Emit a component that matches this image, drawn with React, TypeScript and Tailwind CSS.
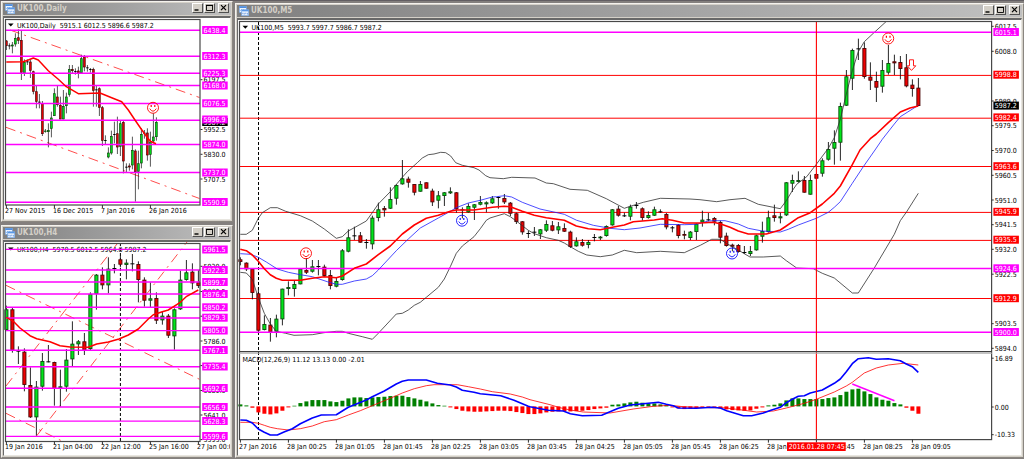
import type { ReactNode } from "react";

type Pt = [number, number];
type Tone = "g" | "r" | "k";
// high, low, body top, body bottom, tone; vertical values are in thirds of a pixel
type Candle = [number, number, number, number, Tone];

const FONT = "font-['DejaVu_Sans_Condensed','DejaVu_Sans',sans-serif]";
const MAGENTA = "#ff00ff";
const RED = "#ff0000";

const shift = (ox: number, oy: number, pts: Pt[]): Pt[] => pts.map(([x, y]) => [ox + x / 3, oy + y / 3]);
const lift = (oy: number, rows: Candle[]): Candle[] =>
  rows.map(([h, l, t, b, c]) => [oy + h / 3, oy + l / 3, oy + t / 3, oy + b / 3, c]);

const m5Candles: Candle[] = [
  ...lift(170, [
    [262, 286, 268, 276, "r"], [277, 303, 278, 298, "r"], [295, 388, 296, 369, "r"], [352, 490, 370, 482, "r"],
    [436, 481, 462, 480, "g"], [444, 515, 464, 487, "r"], [434, 502, 446, 485, "g"], [356, 466, 356, 448, "g"],
    [334, 376, 351, 357, "g"], [332, 380, 342, 357, "g"], [296, 343, 296, 343, "g"], [264, 312, 300, 308, "r"],
    [270, 308, 289, 305, "g"], [270, 316, 288, 291, "k"], [284, 320, 290, 318, "r"], [300, 358, 315, 348, "r"],
    [322, 352, 333, 350, "g"], [237, 332, 241, 330, "g"], [178, 247, 202, 245, "g"], [170, 210, 196, 199, "k"],
    [186, 218, 196, 218, "r"], [207, 236, 216, 219, "k"], [137, 238, 143, 223, "g"], [98, 154, 118, 144, "g"],
    [108, 140, 114, 121, "r"], [52, 117, 87, 116, "g"], [43, 104, 45, 86, "g"], [-30, 44, 25, 43, "g"],
    [20, 53, 26, 38, "r"], [42, 76, 42, 68, "r"], [33, 65, 42, 65, "g"], [37, 56, 37, 56, "r"],
    [56, 108, 62, 97, "r"], [63, 115, 76, 92, "g"], [66, 108, 67, 78, "g"], [52, 72, 64, 70, "g"],
    [66, 128, 67, 118, "r"], [112, 145, 118, 121, "k"], [100, 128, 108, 127, "g"], [102, 150, 103, 113, "g"],
    [78, 106, 96, 104, "g"], [94, 127, 97, 103, "g"],
  ]),
  ...lift(140, [
    [168, 192, 175, 190, "g"], [170, 206, 171, 174, "k"], [162, 192, 174, 187, "r"], [186, 228, 188, 221, "r"],
    [218, 252, 220, 246, "r"], [243, 284, 244, 277, "r"], [272, 294, 279, 282, "k"], [261, 288, 275, 279, "k"],
    [267, 297, 268, 283, "g"], [241, 276, 252, 272, "g"], [243, 274, 256, 272, "r"], [246, 282, 259, 271, "g"],
    [250, 276, 264, 275, "r"], [272, 324, 275, 321, "r"], [292, 320, 304, 319, "g"], [297, 320, 306, 317, "r"],
    [300, 325, 306, 315, "g"], [282, 304, 291, 294, "k"], [288, 300, 290, 295, "g"], [256, 290, 258, 288, "g"],
    [207, 257, 208, 256, "g"], [198, 230, 206, 227, "r"], [218, 231, 226, 229, "k"], [194, 241, 200, 230, "g"],
    [186, 206, 195, 198, "k"], [202, 242, 205, 234, "r"], [214, 236, 225, 234, "g"], [200, 228, 208, 227, "g"],
    [208, 218, 214, 217, "k"], [219, 268, 222, 262, "r"], [258, 277, 262, 265, "k"], [252, 295, 254, 288, "r"],
    [272, 298, 282, 287, "r"], [273, 300, 275, 294, "g"], [250, 300, 251, 276, "g"], [212, 260, 239, 247, "g"],
    [219, 244, 238, 241, "k"], [231, 256, 234, 245, "r"], [242, 310, 246, 293, "r"], [278, 320, 287, 318, "r"],
    [311, 334, 314, 320, "r"], [312, 338, 315, 336, "r"],
  ]),
  ...lift(150, [
    [288, 312, 306, 309, "k"], [288, 318, 303, 312, "g"], [254, 302, 256, 301, "g"], [215, 278, 243, 260, "g"],
    [182, 248, 202, 246, "g"], [164, 215, 196, 204, "r"], [188, 220, 199, 205, "g"], [96, 198, 97, 196, "g"],
    [74, 126, 90, 101, "g"], [64, 98, 90, 96, "g"], [78, 128, 90, 128, "r"], [74, 134, 90, 134, "g"],
    [70, 88, 72, 86, "r"],
  ]),
  ...lift(0, [
    [475, 530, 481, 521, "g"], [426, 482, 447, 479, "g"], [391, 494, 426, 446, "g"], [308, 482, 318, 428, "g"],
    [210, 318, 229, 317, "g"], [146, 270, 150, 236, "g"], [116, 180, 145, 149, "k"], [127, 236, 144, 231, "r"],
    [187, 270, 230, 242, "r"], [215, 306, 243, 263, "r"], [180, 278, 210, 260, "g"], [135, 224, 189, 218, "g"],
    [164, 225, 184, 190, "r"], [168, 238, 186, 207, "r"], [162, 262, 202, 259, "r"], [238, 290, 254, 267, "r"],
    [234, 318, 263, 318, "r"],
  ]),
];

const dailyCandles: Candle[] = lift(0, [
  [120, 150, 122, 138, "r"], [130, 148, 136, 141, "k"], [126, 160, 134, 139, "g"], [100, 140, 114, 133, "g"],
  [88, 132, 112, 122, "r"], [92, 240, 120, 218, "r"], [178, 228, 186, 220, "g"], [178, 195, 184, 189, "k"],
  [180, 234, 185, 212, "r"], [212, 283, 214, 275, "r"], [255, 325, 274, 305, "r"], [282, 325, 305, 309, "k"],
  [303, 408, 310, 402, "r"], [387, 398, 392, 395, "g"], [370, 442, 390, 396, "g"], [335, 412, 353, 386, "g"],
  [265, 348, 280, 348, "g"], [258, 320, 290, 315, "r"], [290, 358, 315, 358, "r"], [270, 358, 318, 358, "g"],
  [278, 340, 290, 318, "g"], [195, 290, 207, 284, "g"], [195, 220, 207, 213, "r"], [205, 224, 213, 218, "k"],
  [200, 235, 212, 220, "r"], [164, 220, 175, 219, "g"], [165, 214, 170, 202, "r"], [195, 215, 202, 207, "k"],
  [204, 218, 207, 211, "k"], [203, 320, 207, 272, "r"], [258, 320, 268, 272, "k"], [262, 348, 265, 323, "r"],
  [318, 438, 322, 422, "r"], [406, 432, 420, 426, "k"], [442, 475, 458, 472, "g"], [392, 464, 408, 460, "g"],
  [365, 430, 402, 408, "k"], [350, 462, 400, 442, "r"], [362, 468, 370, 440, "g"], [360, 520, 366, 484, "r"],
  [490, 516, 500, 505, "k"], [490, 512, 497, 502, "r"], [410, 508, 450, 496, "g"], [448, 605, 452, 516, "r"],
  [452, 568, 490, 515, "g"], [385, 505, 402, 490, "g"], [390, 416, 398, 402, "k"], [385, 482, 398, 466, "r"],
  [395, 500, 425, 464, "g"], [340, 430, 410, 424, "g"], [352, 422, 366, 411, "g"],
]);

const h4Candles: Candle[] = lift(224, [
  [245, 320, 256, 318, "g"], [252, 386, 256, 379, "r"], [367, 420, 380, 383, "k"], [373, 502, 383, 483, "r"],
  [430, 582, 483, 580, "r"], [471, 635, 488, 580, "g"], [387, 500, 411, 488, "g"], [363, 415, 412, 415, "k"],
  [413, 545, 414, 494, "r"], [437, 548, 487, 492, "g"], [375, 503, 407, 488, "g"], [292, 427, 359, 406, "g"],
  [348, 393, 352, 361, "g"], [327, 393, 352, 380, "r"], [205, 380, 210, 375, "g"], [150, 257, 152, 210, "g"],
  [130, 196, 152, 184, "r"], [100, 208, 134, 184, "g"], [120, 148, 132, 135, "k"], [95, 130, 106, 122, "r"],
  [106, 166, 116, 123, "g"], [90, 142, 118, 121, "k"], [112, 235, 120, 168, "r"], [160, 248, 167, 230, "r"],
  [175, 250, 223, 230, "g"], [205, 300, 222, 290, "r"], [262, 302, 275, 289, "g"], [270, 342, 275, 335, "r"],
  [253, 377, 256, 337, "g"], [140, 258, 167, 256, "g"], [108, 170, 145, 168, "g"], [118, 196, 143, 178, "r"],
  [138, 192, 175, 186, "r"],
]);

const maRed: Pt[] = [
  ...shift(234, 170, [[19, 238], [37, 242], [55, 255], [73, 274], [91, 296], [109, 314], [127, 325], [145, 331], [199, 331], [235, 325], [271, 320], [307, 323], [325, 318], [361, 295], [397, 282], [433, 254], [469, 228], [505, 192], [541, 165], [577, 145], [613, 136], [649, 124], [667, 120], [720, 120], [775, 112]]),
  ...shift(490, 140, [[43, 199], [61, 200], [97, 214], [133, 226], [169, 233], [223, 241], [259, 258], [295, 266], [331, 269], [367, 262], [403, 255], [430, 245], [493, 240], [517, 236], [547, 241], [583, 249], [630, 249]]),
  ...shift(700, 150, [[0, 219], [40, 217], [60, 221], [90, 232], [115, 243], [145, 252], [199, 252], [241, 240], [259, 228], [295, 203], [331, 188], [367, 162], [403, 130], [421, 108], [457, 44], [480, 0]]),
  ...shift(780, 0, [[271, 416], [289, 402], [325, 368], [361, 336], [390, 324], [415, 318]]),
];
const maBlue: Pt[] = [
  ...shift(234, 170, [[19, 251], [50, 253], [73, 262], [97, 276], [130, 297], [163, 307], [199, 314], [235, 320], [280, 335], [307, 343], [325, 343], [361, 333], [397, 327], [415, 317], [433, 300], [487, 242], [523, 207], [559, 174], [613, 144], [649, 124], [667, 113], [703, 99], [739, 91], [775, 81]]),
  ...shift(490, 140, [[20, 170], [43, 167], [65, 171], [97, 187], [150, 207], [223, 223], [260, 241], [310, 256], [360, 265], [403, 269], [450, 264], [511, 253], [583, 254], [619, 253], [655, 243]]),
  ...shift(700, 150, [[45, 212], [75, 212], [115, 222], [145, 235], [187, 243], [241, 246], [265, 238], [295, 225], [349, 205], [385, 187], [403, 172], [421, 155], [457, 100], [490, 50], [525, 0]]),
  ...shift(780, 0, [[307, 418], [343, 372], [361, 350], [415, 316]]),
];
const bandUpper: Pt[] = [
  ...shift(234, 170, [[19, 193], [37, 193], [55, 181], [73, 145], [85, 128], [109, 113], [130, 113], [155, 124], [199, 137], [235, 153], [271, 177], [307, 205], [325, 200], [343, 183], [361, 173], [397, 153], [415, 128], [433, 102], [469, 65], [490, 40]]),
  ...shift(234, 0, [[505, 532], [520, 515], [550, 488], [565, 474], [583, 464], [600, 462], [620, 457], [635, 458], [650, 468], [665, 488], [685, 496], [720, 503], [735, 510], [755, 527]]),
  ...shift(490, 140, [[0, 113], [40, 116], [65, 112], [135, 114], [169, 129], [190, 131], [240, 148], [292, 151], [349, 176], [403, 205], [421, 199], [460, 187], [511, 175], [600, 177]]),
  ...shift(700, 150, [[0, 149], [50, 155], [90, 149], [135, 145], [175, 163], [241, 176], [259, 152], [277, 122], [290, 103], [320, 80]]),
  ...shift(780, 0, [[109, 493], [145, 445], [163, 413], [181, 358], [199, 282], [217, 212], [235, 155], [253, 125], [280, 100], [318, 65]]),
];
const bandLower: Pt[] = [
  ...shift(234, 170, [[19, 307], [37, 309], [55, 328], [73, 383], [91, 430], [109, 462], [127, 484], [155, 490], [180, 496], [235, 494], [270, 488], [307, 484], [325, 484], [343, 490], [385, 500], [415, 508], [433, 490], [487, 432], [505, 430], [523, 420], [541, 406], [559, 397], [577, 382], [613, 352], [631, 327], [649, 290], [667, 250], [685, 228], [720, 200], [739, 176], [757, 151]]),
  ...shift(490, 140, [[0, 234], [43, 221], [61, 230], [79, 243], [115, 271], [133, 281], [169, 293], [205, 301], [223, 309], [241, 320], [265, 334], [290, 345], [331, 350], [367, 345], [403, 331], [440, 338], [511, 334], [583, 338], [631, 316], [665, 298], [691, 298], [709, 310]]),
  ...shift(700, 150, [[115, 300], [133, 311], [150, 321], [190, 321], [241, 318], [259, 332], [290, 354], [340, 356], [367, 370], [403, 384], [457, 429], [475, 429], [523, 354]]),
  ...shift(780, 190, [[343, 133], [361, 92], [380, 65], [415, 10]]),
];
const macdBlue: Pt[] = [
  ...shift(234, 340, [[19, 240], [37, 241], [55, 249], [73, 267], [91, 277], [109, 285], [130, 285], [150, 276], [175, 266], [199, 251], [235, 234], [262, 225], [307, 224], [343, 202], [397, 180], [415, 170], [451, 153], [487, 132], [505, 124], [523, 120], [577, 120], [610, 130], [649, 135], [667, 141], [685, 151], [720, 157], [739, 161], [800, 167], [840, 181], [883, 199]]),
  ...shift(530, 340, [[0, 200], [31, 206], [55, 211], [100, 213], [121, 221], [157, 227], [215, 226], [240, 215], [265, 205], [301, 195], [340, 191], [385, 187], [409, 193], [430, 197], [445, 204], [499, 205], [545, 202], [571, 204], [590, 212], [640, 227], [665, 227], [700, 219], [725, 210], [751, 202], [769, 188]]),
  ...shift(780, 190, [[37, 628], [55, 619], [73, 617], [91, 609], [127, 600], [163, 580], [181, 567], [199, 545], [217, 521], [235, 506], [265, 503], [289, 508], [325, 506], [361, 512], [379, 522], [397, 530], [415, 547]]),
];
const macdRed: Pt[] = [
  ...shift(234, 340, [[19, 247], [55, 247], [73, 250], [91, 256], [109, 262], [130, 266], [163, 270], [199, 266], [235, 258], [271, 245], [307, 239], [343, 225], [379, 212], [415, 197], [451, 182], [487, 167], [505, 159], [541, 146], [577, 137], [600, 134], [670, 134], [703, 140], [739, 147], [775, 155], [829, 162], [865, 171]]),
  ...shift(530, 340, [[0, 179], [60, 194], [90, 203], [120, 210], [160, 216], [240, 219], [310, 207], [370, 199], [420, 196], [460, 200], [540, 203], [580, 203], [620, 208], [680, 216], [730, 213], [769, 204]]),
  ...shift(780, 190, [[73, 640], [109, 628], [163, 606], [199, 588], [217, 577], [253, 549], [289, 534], [325, 525], [370, 520], [415, 525]]),
];
const histogram = [
  6, 3, -4, -18, -22, -24, -21, -13, -3, 2, 10, 15, 19, 19, 19, 15, 13, 17, 24, 27, 27, 25, 27, 28, 29, 31, 32, 32, 28,
  24, 20, 15, 9, 4, 2, -3, -8, -13, -15, -16, -16, -15, -14, -13, -13, -14, -17, -20, -23, -23, -21, -18, -16, -15, -14,
  -15, -14, -13, -11, -8, -6, -4, 5, 6, 9, 12, 14, 11, 9, 9, 6, 4, -3, -6, -8, -7, -5, -4, -4, -3, -6, -9, -11, -12, -13,
  -12, -7, -3, 3, 5, 9, 18, 24, 24, 22, 22, 22, 22, 25, 27, 34, 44, 51, 53, 45, 37, 27, 20, 17, 10, 6, -4, -13, -22,
];
const dailyMa = shift(0, 0, [[19, 186], [70, 185], [85, 180], [100, 174], [115, 180], [145, 212], [175, 238], [199, 260], [235, 281], [300, 279], [335, 293], [365, 305], [385, 330], [403, 357], [421, 383], [440, 410], [451, 424], [468, 431]]);
const h4Ma = shift(0, 224, [[19, 280], [40, 292], [60, 312], [90, 335], [110, 344], [150, 353], [180, 365], [210, 369], [265, 370], [290, 360], [325, 354], [357, 345], [385, 333], [415, 315], [445, 285], [460, 272], [487, 263], [505, 258], [541, 235], [560, 217], [595, 198]]);

function Line({ pts, color, width = 1, dash }: { pts: Pt[]; color: string; width?: number; dash?: string }) {
  return (
    <polyline
      points={pts.map(([x, y]) => `${x.toFixed(1)},${y.toFixed(1)}`).join(" ")}
      fill="none" stroke={color} strokeWidth={width} strokeDasharray={dash} strokeLinejoin="round"
    />
  );
}

function Candles({ data, x0, step, width, outline }: { data: Candle[]; x0: number; step: number; width: number; outline: number }) {
  const fills = { g: "#00e61a", r: "#f00000", k: "#000000" };
  return (
    <g>
      {data.map(([high, low, top, bottom, tone], i) => {
        const x = x0 + i * step;
        return (
          <g key={i}>
            <line x1={x} x2={x} y1={high} y2={low} stroke="#101010" strokeWidth={outline} />
            {tone === "k" ? (
              <rect x={x - width / 2} y={top} width={width} height={1} fill="#000000" />
            ) : (
              <rect
                x={x - width / 2 + outline / 2} y={top + outline / 2} width={width - outline}
                height={Math.max(bottom - top - outline, 0.6)}
                fill={fills[tone]} stroke={tone === "g" ? "#0a4a0a" : "#4a0505"} strokeWidth={outline}
              />
            )}
          </g>
        );
      })}
    </g>
  );
}

function Levels({ x1, x2, ys, color, width = 1 }: { x1: number; x2: number; ys: number[]; color: string; width?: number }) {
  return <g>{ys.map((y) => <line key={y} x1={x1} x2={x2} y1={y} y2={y} stroke={color} strokeWidth={width} />)}</g>;
}

function Prices({ x, items }: { x: number; items: [number, string][] }) {
  return (
    <g>
      {items.map(([y, label]) => (
        <g key={label}>
          <line x1={x - 3} x2={x - 1} y1={y} y2={y} stroke="#303030" />
          <text x={x} y={y + 2.6}>{label}</text>
        </g>
      ))}
    </g>
  );
}

function Tags({ x, color, items }: { x: number; color: string; items: [number, string][] }) {
  return (
    <g>
      {items.map(([y, label]) => (
        <g key={label}>
          <rect x={x - 1.3} y={y - 4} width={25.5} height={8} fill={color} />
          <text x={x} y={y + 2.6} className="fill-white">{label}</text>
        </g>
      ))}
    </g>
  );
}

function Dates({ y, items, tickY }: { y: number; items: [number, string][]; tickY: number }) {
  return (
    <g>
      {items.map(([x, label]) => (
        <g key={label}>
          <line x1={x + 1.4} x2={x + 1.4} y1={tickY} y2={tickY + 3} stroke="#303030" />
          <text x={x} y={y}>{label}</text>
        </g>
      ))}
    </g>
  );
}

function Smiley({ x, y, color }: { x: number; y: number; color: string }) {
  return (
    <g fill="none" stroke={color} strokeWidth={0.9}>
      <circle cx={x} cy={y} r={5.5} />
      <path d={`M${x - 3.3} ${y + 0.8} Q${x} ${y + 6} ${x + 3.3} ${y + 0.8}`} />
      <path d={`M${x - 1.8} ${y - 2.8}v2 M${x + 1.8} ${y - 2.8}v2`} strokeWidth={1.2} />
    </g>
  );
}

function Header({ x, y, children }: { x: number; y: number; children: ReactNode }) {
  return (
    <g>
      <path d={`M${x} ${y - 4}h5.6l-2.8 3z`} fill="#000000" />
      <text x={x + 9} y={y} xmlSpace="preserve">{children}</text>
    </g>
  );
}

function Frame({ x1, y1, x2, y2 }: { x1: number; y1: number; x2: number; y2: number }) {
  return <rect x={x1} y={y1} width={x2 - x1} height={y2 - y1} fill="none" stroke="#484848" strokeWidth={1.2} />;
}

function Chart({ box, label, children }: { box: string; label: string; children: ReactNode }) {
  return (
    <svg viewBox={box} role="img" aria-label={label} className={`block h-auto w-full bg-white fill-black text-[7px] ${FONT}`}>
      {children}
    </svg>
  );
}

function TitleButton({ label, children }: { label: string; children: ReactNode }) {
  return (
    <button
      type="button" aria-label={label}
      className="flex h-[10px] w-[11px] items-center justify-center border border-t-white border-l-white border-r-[#505050] border-b-[#505050] bg-[#d4d0c8]"
    >
      <svg viewBox="0 0 9 8" className="block h-[8px] w-[9px] fill-none stroke-black">{children}</svg>
    </button>
  );
}

function ChartWindow({ title, children }: { title: string; children: ReactNode }) {
  return (
    <section className="border border-t-[#f4f2ee] border-l-[#f4f2ee] border-r-[#8a8680] border-b-[#8a8680] bg-[#d4d0c8] p-px">
      <header className="flex h-3 items-start bg-linear-to-r from-[#808080] to-[#c0c0c0] pr-[2px] pl-[2px]">
        <svg viewBox="0 0 10 10" className="mt-px block size-[10px]" aria-hidden="true">
          <rect x="0.3" y="0.3" width="7" height="6" fill="#eaf4ff" stroke="#6fa4e6" strokeWidth="0.6" />
          <rect x="0.3" y="0.3" width="7" height="1.7" fill="#4f8fe0" />
          <path d="M1.3 4.6l1.2-1 1.2 1 1.2-1.4" fill="none" stroke="#3f7fd8" strokeWidth="0.7" />
          <rect x="2.7" y="3.8" width="7" height="5.9" fill="#f6faff" stroke="#6fa4e6" strokeWidth="0.6" />
          <rect x="2.7" y="3.8" width="7" height="1.6" fill="#5a98e6" />
          <path d="M3.8 8.2v-1.6M5.2 8.6v-1.8M6.8 8.2v-1.6M8.4 8.6v-1.8" stroke="#3f7fd8" strokeWidth="0.7" />
        </svg>
        <h2 className={`ml-[2px] flex-1 text-[8px] leading-[11px] font-bold text-[#d4d0c8] ${FONT}`}>{title}</h2>
        <div className="flex">
          <TitleButton label={`Minimize ${title}`}><path d="M1.5 6h4" strokeWidth="1.4" /></TitleButton>
          <div className="mr-[3px] ml-px">
            <TitleButton label={`Maximize ${title}`}>
              <path d="M1.5 1.5h6v5h-6z" strokeWidth="0.9" /><path d="M1 1.4h7" strokeWidth="1.2" />
            </TitleButton>
          </div>
          <TitleButton label={`Close ${title}`}><path d="M2 1.2l5 5M7 1.2l-5 5" strokeWidth="1.2" /></TitleButton>
        </div>
      </header>
      <div className="mt-px border-t-2 border-r border-b border-l border-t-[#686868] border-r-[#e8e6e0] border-b-[#e8e6e0] border-l-[#686868]">
        {children}
      </div>
    </section>
  );
}

function DailyChart() {
  return (
    <Chart box="4 18 226 201" label="UK100 daily chart">
      <Line pts={[[10, 30], [199.5, 97.5]]} color={RED} width={0.7} dash="10 5 2 5" />
      <Line pts={[[6, 127.3], [199.5, 198.5]]} color={RED} width={0.7} dash="10 5 2 5" />
      <Candles data={dailyCandles} x0={6.4} step={3} width={2.4} outline={0.7} />
      <Header x={8} y={27.5}>{"UK100,Daily  5915.1 6012.5 5896.6 5987.2"}</Header>
      <Levels x1={6} x2={200} ys={[30.3, 56.3, 73.3, 85.4, 103.4, 120.2, 144.5, 172.5, 202.3]} color={MAGENTA} width={1.5} />
      <Line pts={dailyMa} color={RED} width={1.5} />
      <Smiley x={153} y={107.8} color={RED} />
      <Frame x1={5.5} y1={19.5} x2={200} y2={205} />
      <Prices x={203.5} items={[[79.7, "6197.5"], [129.5, "5952.5"], [154.3, "5830.0"], [179, "5707.5"]]} />
      <Tags x={203.5} color="#000000" items={[[122, "5987.2"]]} />
      <Tags
        x={203.5} color={MAGENTA}
        items={[[30, "6438.4"], [56, "6312.3"], [73.3, "6225.3"], [85.5, "6168.0"], [103.3, "6076.5"], [119.5, "5996.9"], [144.5, "5874.0"], [172.5, "5737.0"], [202, "5590.9"]]}
      />
      <Dates y={212.6} tickY={205} items={[[5, "27 Nov 2015"], [53, "16 Dec 2015"], [101, "7 Jan 2016"], [149, "26 Jan 2016"]]} />
    </Chart>
  );
}

function H4Chart() {
  return (
    <Chart box="4 242 226 213" label="UK100 H4 chart">
      <Line pts={[[6, 386], [117, 244]]} color={RED} width={0.7} dash="10 5 2 5" />
      <Line pts={[[36.5, 436], [187, 242]]} color={RED} width={0.7} dash="10 5 2 5" />
      <Line pts={[[6, 285.3], [199.5, 379.3]]} color={RED} width={0.7} dash="10 5 2 5" />
      <Line pts={[[6, 413.3], [63, 441.5]]} color={RED} width={0.7} dash="10 5 2 5" />
      <Line pts={[[120.4, 243], [120.4, 441]]} color="#000000" dash="3 2" />
      <Candles data={h4Candles} x0={6.4} step={6} width={4} outline={0.9} />
      <Header x={8} y={251.5}>{"UK100,H4  5970.5 6012.5 5964.8 5987.2"}</Header>
      <Levels x1={6} x2={200} ys={[249.4, 270, 282, 294, 307.3, 318, 330.6, 350.2, 366.7, 388.3, 407, 421.1, 436.4]} color={MAGENTA} width={1.4} />
      <Line pts={h4Ma} color={RED} width={1.5} />
      <Frame x1={5.5} y1={243.5} x2={200} y2={441.5} />
      <Prices
        x={203.5}
        items={[[266.3, "5930.0"], [291.5, "5882.5"], [316.2, "5834.5"], [341, "5786.0"], [365.6, "5737.5"], [390.5, "5689.5"], [415, "5641.0"], [439.6, "5593.0"]]}
      />
      <Tags
        x={203.5} color={MAGENTA}
        items={[[249.5, "5961.5"], [270, "5922.3"], [282, "5899.7"], [294, "5876.4"], [307.3, "5850.2"], [317.7, "5829.3"], [330.5, "5805.0"], [350, "5767.1"], [366.5, "5735.4"], [388, "5692.6"], [407, "5656.9"], [421, "5628.3"], [436, "5599.6"]]}
      />
      <Dates
        y={449} tickY={441.5}
        items={[[5, "19 Jan 2016"], [53, "21 Jan 04:00"], [101, "22 Jan 12:00"], [149, "25 Jan 16:00"], [197, "27 Jan 00:00"]]}
      />
    </Chart>
  );
}

function M5Chart() {
  return (
    <Chart box="238 20 783 435" label="UK100 M5 chart with MACD">
      <Line pts={[[258.5, 22], [258.5, 439]]} color="#000000" dash="3 2" />
      <Levels x1={240} x2={992} ys={[75.4, 118.2, 166.5, 212.4, 240.4, 298.5]} color={RED} />
      <Candles data={m5Candles} x0={240.4} step={6} width={4} outline={0.9} />
      <Line pts={bandUpper} color="#303030" width={0.8} />
      <Line pts={bandLower} color="#303030" width={0.8} />
      <Levels x1={240} x2={992} ys={[32.3, 268.4, 332.3]} color={MAGENTA} width={1.5} />
      <Line pts={maBlue} color="#2020ff" width={0.8} />
      <Line pts={maRed} color={RED} width={1.6} />
      <Header x={242.5} y={29.8}>{"UK100,M5  5993.7 5997.7 5986.7 5987.2"}</Header>
      <Smiley x={306} y={253.3} color={RED} />
      <Smiley x={462} y={220.7} color="#1010ff" />
      <Smiley x={732} y={253.5} color="#1010ff" />
      <Smiley x={888.2} y={38.5} color={RED} />
      <path d="M909.5 59.8h4v6h2.3l-4.3 4.6l-4.3-4.6h2.3z" fill="#ffffff" stroke={RED} strokeWidth={0.9} />

      <g>
        {histogram.map((v, i) => (
          <rect
            key={i} x={238.4 + i * 6} width={4} y={v > 0 ? 406.4 - v / 3 : 406.4} height={Math.abs(v) / 3}
            fill={v > 0 ? "#008000" : RED}
          />
        ))}
      </g>
      <Line pts={macdRed} color={RED} width={0.8} />
      <Line pts={macdBlue} color="#0000ff" width={1.6} />
      <Line pts={[[852.3, 384], [894.5, 400.7]]} color={MAGENTA} width={1.5} />
      <Line pts={[[816.4, 22], [816.4, 439]]} color={RED} width={1.1} />
      <text x={242.5} y={362.2}>MACD(12,26,9) 11.12 13.13 0.00 -2.01</text>

      <Frame x1={239.5} y1={21.5} x2={991.6} y2={439.6} />
      <line x1={239} x2={992} y1={351.6} y2={351.6} stroke="#404040" strokeWidth={1.3} />
      <line x1={239} x2={992} y1={353.2} y2={353.2} stroke="#a8a8a8" />

      <Prices
        x={994.7}
        items={[[26.3, "6017.5"], [51.3, "6008.0"], [101, "5989.0"], [125.7, "5979.5"], [150.5, "5970.0"], [175.3, "5960.5"], [200, "5951.0"], [224.7, "5941.5"], [249.3, "5932.0"], [274.2, "5922.5"], [323.7, "5903.5"], [348.3, "5894.0"], [358.2, "16.89"], [407, "0.00"], [434.7, "-10.33"]]}
      />
      <Tags x={994.7} color={MAGENTA} items={[[32, "6015.1"], [268.3, "5924.6"], [332, "5900.0"]]} />
      <Tags
        x={994.7} color={RED}
        items={[[74.7, "5998.8"], [117.4, "5982.4"], [166.2, "5963.6"], [211.8, "5945.9"], [239.7, "5935.5"], [298.2, "5912.9"]]}
      />
      <Tags x={994.7} color="#000000" items={[[105.6, "5987.2"]]} />
      <Dates
        y={449} tickY={439.6}
        items={[[239, "27 Jan 2016"], [287, "28 Jan 00:25"], [335, "28 Jan 01:05"], [383, "28 Jan 01:45"], [431, "28 Jan 02:25"], [479, "28 Jan 03:05"], [527, "28 Jan 03:45"], [575, "28 Jan 04:25"], [623, "28 Jan 05:05"], [671, "28 Jan 05:45"], [719, "28 Jan 06:25"], [767, "28 Jan 07:05"], [815, "28 Jan 07:45"], [863, "28 Jan 08:25"], [911, "28 Jan 09:05"]]}
      />
      <rect x={787} y={442.3} width={58.7} height={8.7} fill={RED} />
      <text x={788.7} y={449} className="fill-white">2016.01.28 07:45</text>
    </Chart>
  );
}

export default function App() {
  return (
    <main className="grid grid-cols-[232fr_789fr] items-start gap-[2px] border-t border-t-[#625e62] bg-[#84807e] pb-px pl-px">
      <div className="flex min-w-0 flex-col gap-[3px]">
        <ChartWindow title="UK100,Daily"><DailyChart /></ChartWindow>
        <ChartWindow title="UK100,H4"><H4Chart /></ChartWindow>
      </div>
      <div className="min-w-0 pt-[2px]">
        <ChartWindow title="UK100,M5"><M5Chart /></ChartWindow>
      </div>
    </main>
  );
}
